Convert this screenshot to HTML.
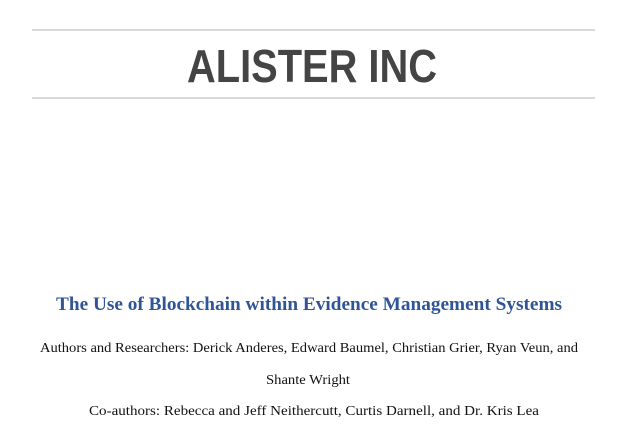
<!DOCTYPE html>
<html><head><meta charset="utf-8"><style>
html,body{margin:0;padding:0;background:#fff;width:629px;height:432px;overflow:hidden}
</style></head><body>
<svg width="629" height="432" xmlns="http://www.w3.org/2000/svg">
<rect x="32" y="29" width="563" height="2" fill="#d9d9d9"/>
<rect x="32" y="97" width="563" height="2" fill="#d9d9d9"/>
<text x="312" y="82" text-anchor="middle" font-family="Liberation Sans, sans-serif" font-weight="bold" font-size="46" fill="#444" textLength="250" lengthAdjust="spacingAndGlyphs">ALISTER INC</text>
<text x="309" y="310" text-anchor="middle" font-family="Liberation Serif, serif" font-weight="bold" font-size="18.5" fill="#2f5597" textLength="506" lengthAdjust="spacingAndGlyphs">The Use of Blockchain within Evidence Management Systems</text>
<text x="309" y="352" text-anchor="middle" font-family="Liberation Serif, serif" font-size="14" fill="#111" textLength="538" lengthAdjust="spacingAndGlyphs">Authors and Researchers: Derick Anderes, Edward Baumel, Christian Grier, Ryan Veun, and</text>
<text x="308" y="384" text-anchor="middle" font-family="Liberation Serif, serif" font-size="14" fill="#111" textLength="84" lengthAdjust="spacingAndGlyphs">Shante Wright</text>
<text x="314" y="415" text-anchor="middle" font-family="Liberation Serif, serif" font-size="14" fill="#111" textLength="450" lengthAdjust="spacingAndGlyphs">Co-authors: Rebecca and Jeff Neithercutt, Curtis Darnell, and Dr. Kris Lea</text>
</svg>
</body></html>
